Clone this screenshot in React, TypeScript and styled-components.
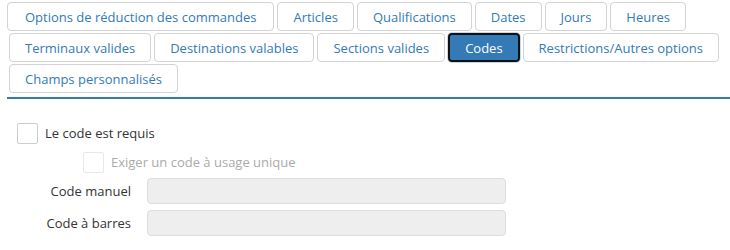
import styled, { createGlobalStyle, css } from "styled-components";

const GlobalStyle = createGlobalStyle`
  html, body {
    margin: 0;
    padding: 0;
    background: #fff;
  }
  body {
    font-family: "Open Sans", "Noto Sans", sans-serif;
    font-size: 13px;
    color: #333;
  }
`;

const tabs = [
  "Options de réduction des commandes",
  "Articles",
  "Qualifications",
  "Dates",
  "Jours",
  "Heures",
  "Terminaux valides",
  "Destinations valables",
  "Sections valides",
  "Codes",
  "Restrictions/Autres options",
  "Champs personnalisés",
];

export default function App() {
  return (
    <>
      <GlobalStyle />
      <Page>
        <TabList>
          {tabs.map((t) => (
            <Tab key={t} $active={t === "Codes"}>
              {t}
            </Tab>
          ))}
        </TabList>
        <Panel>
          <CheckRow>
            <Box />
            <span>Le code est requis</span>
          </CheckRow>
          <CheckRow $indent $disabled>
            <Box $disabled />
            <span>Exiger un code à usage unique</span>
          </CheckRow>
          <Field>
            <Label>Code manuel</Label>
            <Input disabled />
          </Field>
          <Field>
            <Label>Code à barres</Label>
            <Input disabled />
          </Field>
        </Panel>
      </Page>
    </>
  );
}

const Page = styled.div`
  padding: 2px 0 0 7px;
`;

const TabList = styled.div`
  display: flex;
  flex-wrap: wrap;
  gap: 2px 3px;
  padding: 0 0 4px 2px;
  border-bottom: 2px solid #337ab7;
`;

const Tab = styled.button<{ $active?: boolean }>`
  box-sizing: border-box;
  height: 29px;
  padding: 0 15px;
  font-family: inherit;
  font-size: 13px;
  color: #337ab7;
  background: #fff;
  border: 1px solid #d3d3d3;
  border-radius: 4px;
  cursor: pointer;
  &:first-child {
    margin-left: -2px;
    padding: 0 17px;
  }
  ${(p) =>
    p.$active &&
    css`
      background: #337ab7;
      color: #fff;
      border: 2px solid #111;
      box-shadow: 0 0 0 1px #c9d9ea;
    `}
`;

const Panel = styled.div`
  padding: 23px 0 0 10px;
  display: flex;
  flex-direction: column;
`;

const CheckRow = styled.label<{ $indent?: boolean; $disabled?: boolean }>`
  display: flex;
  align-items: center;
  gap: 7px;
  height: 22px;
  margin-left: ${(p) => (p.$indent ? "66px" : "0")};
  margin-bottom: ${(p) => (p.$indent ? "5px" : "7px")};
  color: ${(p) => (p.$disabled ? "#aaa" : "#333")};
`;

const Box = styled.span<{ $disabled?: boolean }>`
  box-sizing: border-box;
  width: 21px;
  height: 21px;
  border: 1px solid ${(p) => (p.$disabled ? "#e8e8e8" : "#ccc")};
  border-radius: 2px;
  background: #fff;
`;

const Field = styled.div`
  display: grid;
  grid-template-columns: 114px 359px;
  column-gap: 16px;
  align-items: center;
  margin-bottom: 6px;
`;

const Label = styled.span`
  text-align: right;
`;

const Input = styled.input`
  box-sizing: border-box;
  height: 26px;
  background: #eee;
  border: 1px solid #ddd;
  border-radius: 4px;
`;
